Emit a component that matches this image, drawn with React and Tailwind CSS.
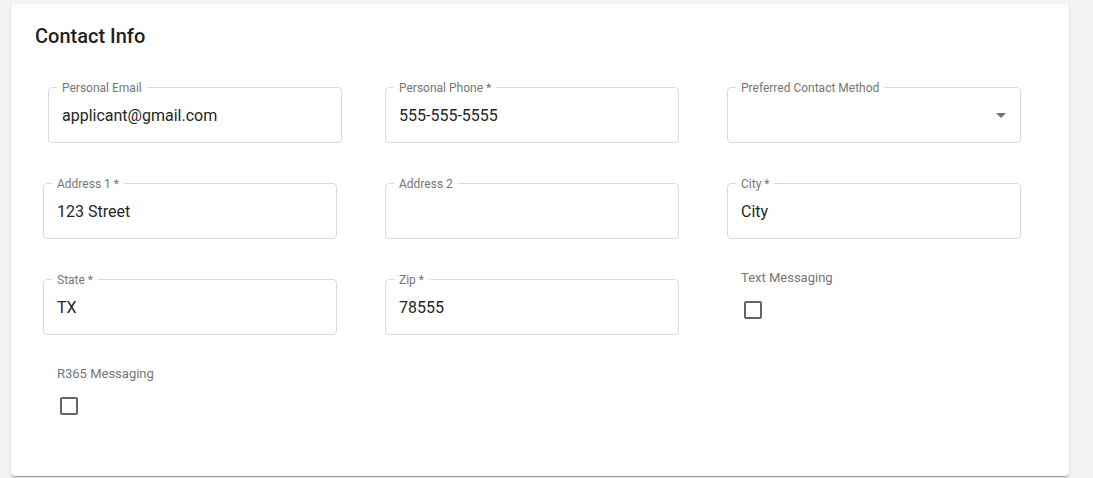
const fields = [
  { label: 'Personal Email', value: 'applicant@gmail.com', shift: true },
  { label: 'Personal Phone *', value: '555-555-5555' },
  { label: 'Preferred Contact Method', value: '', select: true },
  { label: 'Address 1 *', value: '123 Street' },
  { label: 'Address 2', value: '' },
  { label: 'City *', value: 'City' },
  { label: 'State *', value: 'TX' },
  { label: 'Zip *', value: '78555' },
  { label: 'Text Messaging', checkbox: true },
  { label: 'R365 Messaging', checkbox: true },
];

function OutlinedField({ label, value, select, shift }) {
  return (
    <div className={`relative h-[56px] w-[294px] rounded-[4px] border border-[#dadada] ${shift ? 'ml-[5px]' : ''}`}>
      <span className="absolute left-[8px] top-0 -translate-y-1/2 bg-white px-[5px] text-[12px] leading-[14px] text-[#767676]">
        {label}
      </span>
      <div className="flex h-full items-center px-[13px] pt-[2px] text-[16px] text-[#262626]">
        {value}
      </div>
      {select && (
        <svg viewBox="0 0 24 24" className="absolute right-[7px] top-[15px] h-6 w-6 fill-[#757575]">
          <path d="M7 10l5 5 5-5z" />
        </svg>
      )}
    </div>
  );
}

function CheckboxField({ label }) {
  return (
    <div className="-mt-[9px] pl-[14px]">
      <div className="text-[13px] leading-[16px] text-[#767676]">{label}</div>
      <div className="ml-[3px] mt-[15px] h-[18px] w-[18px] rounded-[2px] border-2 border-[#666666]" />
    </div>
  );
}

export default function App() {
  return (
    <div className="min-h-[478px] bg-[#f4f4f4] pt-[4px] font-['Roboto',sans-serif]">
      <div className="ml-[11px] w-[1058px] rounded-[4px] bg-white px-6 pb-[45px] pt-[18px] shadow-[0_2px_1px_-1px_rgba(0,0,0,0.2),0_1px_1px_0_rgba(0,0,0,0.14),0_1px_3px_0_rgba(0,0,0,0.12)]">
        <h2 className="text-[20px] font-medium leading-[28px] text-[#1f1f1f]">Contact Info</h2>
        <div className="ml-[8px] mt-[37px] grid grid-cols-[294px_294px_294px] auto-rows-[56px] gap-x-[48px] gap-y-[40px]">
          {fields.map((f) =>
            f.checkbox ? (
              <CheckboxField key={f.label} label={f.label} />
            ) : (
              <OutlinedField key={f.label} {...f} />
            )
          )}
        </div>
      </div>
    </div>
  );
}
